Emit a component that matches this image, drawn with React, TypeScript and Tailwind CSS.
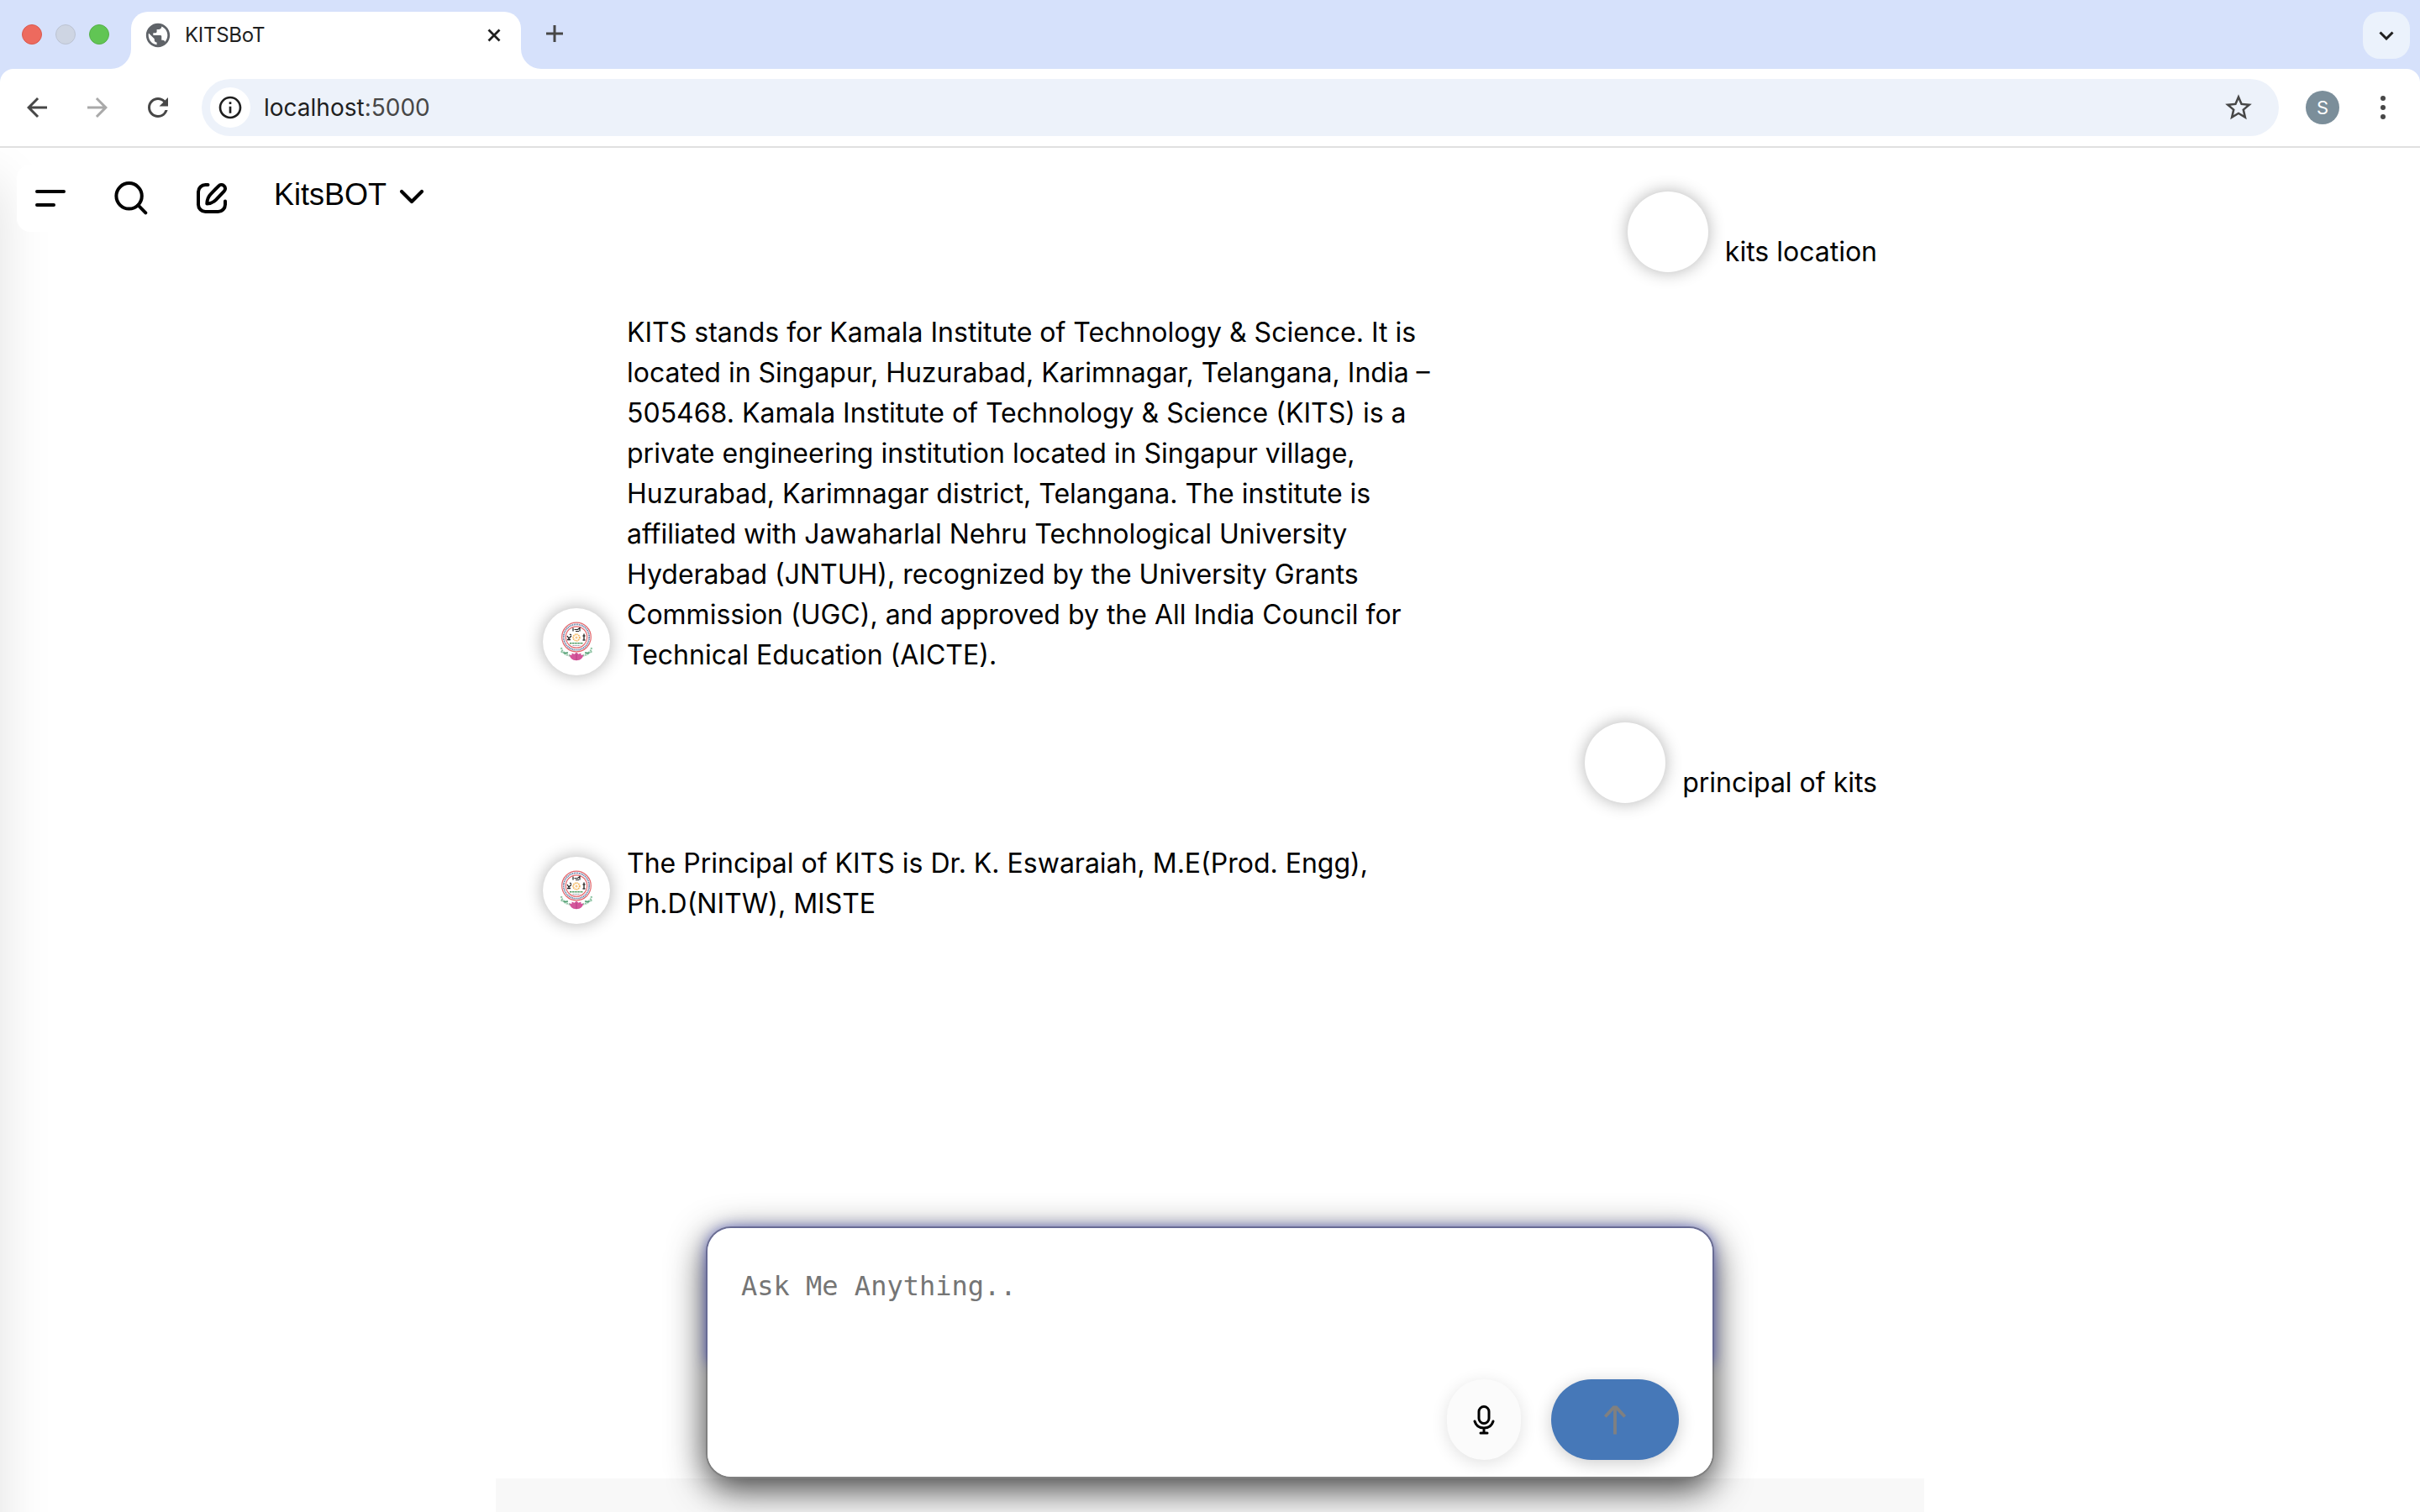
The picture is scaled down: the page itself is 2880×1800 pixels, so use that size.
import React from "react";
import {
  MdArrowBack,
  MdArrowForward,
  MdInfoOutline,
  MdPublic,
  MdRefresh,
  MdStarBorder,
} from "react-icons/md";

function TabStrip() {
  return (
    <div className="flex h-[82px] shrink-0 items-start bg-[#d6e1fb]">
      <div className="flex h-[82px] w-[156px] items-center gap-4 pl-[26px]">
        <span className="size-6 rounded-full border border-[#d9594e] bg-[#ed6a5e]" />
        <span className="size-6 rounded-full border border-[#bcc3d2] bg-[#ced5e3]" />
        <span className="size-6 rounded-full border border-[#55b048] bg-[#61c554]" />
      </div>
      <div className="relative mt-[14px] flex h-[68px] w-[464px] items-start rounded-t-[20px] bg-white pl-[18px]">
        <svg className="absolute bottom-0 -left-6 size-6" viewBox="0 0 24 24">
          <path d="M24 0v24H0A24 24 0 0 0 24 0Z" fill="#fff" />
        </svg>
        <svg className="absolute -right-6 bottom-0 size-6" viewBox="0 0 24 24">
          <path d="M0 0v24h24A24 24 0 0 1 0 0Z" fill="#fff" />
        </svg>
        <div className="flex h-14 w-full items-center">
          <MdPublic className="-ml-[3px] size-[34px] text-[#5f6368]" />
          <span className="ml-[15px] flex-1 text-[24px] leading-none tracking-[-0.3px] text-[#1f1f1f]">
            KITSBoT
          </span>
          <svg className="mr-6 size-4" viewBox="0 0 16 16">
            <path d="M1.500 1.500l13 13M14.500 1.500l-13 13" stroke="#1f1f1f" strokeWidth="2.800" />
          </svg>
        </div>
      </div>
      <svg className="mt-[30px] ml-[30px] size-5" viewBox="0 0 20 20">
        <path d="M0 10h20M10 0v20" stroke="#474747" strokeWidth="3" />
      </svg>
      <div className="mt-[14px] mr-3 ml-auto flex size-14 items-center justify-center rounded-[20px] bg-[#ebf2fc]">
        <svg className="h-[11px] w-[18px]" viewBox="0 0 18 11">
          <path d="M1.500 1.500L9 9l7.500-7.500" fill="none" stroke="#1f1f1f" strokeWidth="3" />
        </svg>
      </div>
    </div>
  );
}

function Toolbar() {
  return (
    <div className="shrink-0 bg-[#d6e1fb]">
      <div className="flex h-[94px] items-center rounded-t-[16px] border-b-2 border-[#e0e0e0] bg-white">
        <MdArrowBack className="ml-[26px] size-9 text-[#474747]" />
        <MdArrowForward className="ml-9 size-9 text-[#a9a9a9]" />
        <MdRefresh className="ml-9 size-9 text-[#474747]" />
        <div className="ml-[34px] flex h-[68px] w-[2472px] items-center rounded-full bg-[#edf2fa] pr-[29px] pl-[10px]">
          <span className="flex size-12 items-center justify-center rounded-full bg-white">
            <MdInfoOutline className="size-8 text-[#1f1f1f]" />
          </span>
          <span className="ml-4 flex-1 text-[28px] leading-none text-[#1f1f1f]">
            localhost<span className="text-[#474747]">:5000</span>
          </span>
          <MdStarBorder className="size-[38px] text-[#474747]" />
        </div>
        <span className="ml-8 flex size-10 items-center justify-center rounded-full bg-[#7b8e9a] text-[22px] leading-none text-white">
          S
        </span>
        <div className="ml-[49px] flex flex-col gap-[5px]">
          <span className="size-1.5 rounded-full bg-[#474747]" />
          <span className="size-1.5 rounded-full bg-[#474747]" />
          <span className="size-1.5 rounded-full bg-[#474747]" />
        </div>
      </div>
    </div>
  );
}

function AppHeader() {
  return (
    <header className="absolute top-5 left-5 flex h-20 w-[500px] items-start rounded-2xl bg-white text-black">
      <svg className="mt-[29px] ml-[22px] h-[22px] w-9" viewBox="0 0 36 22">
        <path d="M2 3h32M2 19h20" stroke="currentColor" strokeWidth="4" strokeLinecap="round" />
      </svg>
      <svg className="mt-5 ml-[58px] size-10" viewBox="0 0 40 40" fill="none" stroke="currentColor" strokeWidth="4">
        <circle cx="17.600" cy="17.300" r="15.200" />
        <path d="M28.500 28.300L37.300 37.300" strokeLinecap="round" />
      </svg>
      <svg
        className="mt-[22px] ml-[58px] size-9"
        viewBox="0 0 36 36"
        fill="none"
        stroke="currentColor"
        strokeWidth="4"
        strokeLinecap="round"
        strokeLinejoin="round"
      >
        <path d="M13.500 2h-3A8.500 8.500 0 0 0 2 10.500v15A8.500 8.500 0 0 0 10.500 34h15a8.500 8.500 0 0 0 8.500-8.500V21.500" />
        <path d="M12.300 24.500c.2-5.500 1.200-8.200 4.200-11.200L26.300 3.300a4.500 4.500 0 0 1 6.400 6.400L23 19.800c-3 3-5.700 4.500-10.700 4.700z" />
      </svg>
      <span className="mt-[16px] ml-[56px] font-['Liberation_Sans',sans-serif] text-[36px] leading-[40px]">KitsBOT</span>
      <svg className="mt-[28px] ml-[15px] h-[20px] w-[30px]" viewBox="0 0 30 20">
        <path
          d="M3 4L15 16L27 4"
          fill="none"
          stroke="currentColor"
          strokeWidth="4.200"
          strokeLinecap="round"
          strokeLinejoin="round"
        />
      </svg>
    </header>
  );
}

function Crest() {
  return (
    <svg className="h-12 w-10" viewBox="0 0 40 48" fill="none">
      <circle cx="20" cy="18.500" r="17.300" stroke="#e4686d" strokeWidth="1.200" />
      <circle cx="20" cy="18.500" r="15.200" stroke="#6a7ea3" strokeWidth="1.800" strokeDasharray="1.300 0.700" />
      <circle cx="20" cy="18.500" r="12.700" stroke="#e4686d" strokeWidth="1.200" />
      <path d="M16 7.500v4M17.500 9.500h4l2.500-2v4M19 11.500h4" stroke="#222" strokeWidth="1.200" />
      <path d="M9 17l2 3 3-3M9 21.500h4M12 15l2 1" stroke="#222" strokeWidth="1.300" />
      <path d="M29 14.500v8M27.500 17h3M27.500 22h3" stroke="#333" strokeWidth="1.400" />
      <circle cx="20" cy="19" r="3.800" stroke="#f4b65c" strokeWidth="1.800" strokeDasharray="1.500 0.700" />
      <circle cx="20" cy="19" r="1.500" fill="#f7c987" />
      <path d="M12 25.800h16" stroke="#4e9c61" strokeWidth="1.500" strokeDasharray="2.500 0.600" />
      <path d="M15.500 28.500h9" stroke="#8a93a5" strokeWidth="0.900" strokeDasharray="1.500 0.500" />
      <path
        d="M2 31c1 6 5 9 11 9.500M38 31c-1 6-5 9-11 9.500M1.500 36c3 0 5 1 7 4M38.500 36c-3 0-5 1-7 4"
        stroke="#8fc5a5"
        strokeWidth="2.200"
        strokeDasharray="1.800 0.900"
      />
      <path d="M5 37.500l5-.5M35 37.500l-5-.5" stroke="#4e9c70" strokeWidth="1.600" />
      <path
        d="M20 36.500l2.500 2.300 2.800-1.300.4 2.500 2.600-.5c-.8 4-3 6.500-8.300 6.700-5.300-.2-7.500-2.700-8.300-6.700l2.600.5.4-2.500 2.800 1.300z"
        fill="#d4559a"
      />
      <path d="M20 39v7" stroke="#b23a80" strokeWidth="0.800" />
    </svg>
  );
}

function UserMessage({ text }: { text: string }) {
  return (
    <div className="flex items-end gap-5 self-end">
      <span className="size-24 rounded-full bg-white shadow-[0_0_20px_rgba(0,0,0,0.3)]" />
      <p>{text}</p>
    </div>
  );
}

function BotMessage({ text }: { text: string }) {
  return (
    <div className="flex items-end gap-5">
      <span className="flex size-20 shrink-0 items-center justify-center rounded-full bg-white shadow-[0_0_20px_rgba(0,0,0,0.3)]">
        <Crest />
      </span>
      <p className="w-[975px]">{text}</p>
    </div>
  );
}

function Composer() {
  return (
    <div className="relative z-10 flex h-[300px] w-[1200px] flex-col rounded-[30px] border-2 border-[#808080] bg-white shadow-[0_12px_44px_rgba(0,0,0,0.78)]">
      <div className="h-[160px] rounded-t-[28px] bg-white px-10 pt-[50px] font-['DejaVu_Sans_Mono',monospace] text-[32px] leading-[38px] text-[#757575] shadow-[0_0_16px_rgba(45,55,200,0.65)]">
        Ask Me Anything..
      </div>
      <div className="relative flex flex-1 items-start justify-end gap-9 rounded-b-[28px] bg-white pt-5 pr-10">
        <button className="flex h-24 w-[88px] items-center justify-center rounded-full bg-[#fbfbfb] shadow-[0_4px_20px_rgba(0,0,0,0.12)]">
          <svg className="h-9 w-7" viewBox="0 0 28 36" fill="none" stroke="#000" strokeWidth="3" strokeLinecap="round">
            <rect x="8" y="2.500" width="12" height="20" rx="6" />
            <path d="M3 20c1.500 5 5.500 8 11 8s9.500-3 11-8M14 28v6M10 34h8" />
          </svg>
        </button>
        <button className="flex h-24 w-[152px] items-center justify-center rounded-[48px] bg-[#4678b8] shadow-[0_4px_20px_rgba(0,0,0,0.2)]">
          <svg className="h-9 w-7" viewBox="0 0 28 36" fill="none" stroke="#808080" strokeWidth="3.800">
            <path d="M14 35.500V2M2.300 14.500L12.500 3.400h3L25.700 14.500" />
          </svg>
        </button>
      </div>
    </div>
  );
}

export default function App() {
  return (
    <div className="flex h-[1800px] w-[2880px] flex-col overflow-hidden bg-white font-['Inter',sans-serif]">
      <TabStrip />
      <Toolbar />
      <main className="relative flex flex-1 flex-col overflow-hidden">
        <div className="absolute top-10 -bottom-40 -left-[200px] w-[200px] shadow-[0_0_60px_rgba(0,0,0,0.12)]" />
        <AppHeader />
        <div className="ml-[646px] flex w-[1588px] flex-1 flex-col gap-12 pt-[52px] text-[32px] leading-[48px] text-black">
          <UserMessage text="kits location" />
          <BotMessage text="KITS stands for Kamala Institute of Technology & Science. It is located in Singapur, Huzurabad, Karimnagar, Telangana, India – 505468. Kamala Institute of Technology & Science (KITS) is a private engineering institution located in Singapur village, Huzurabad, Karimnagar district, Telangana. The institute is affiliated with Jawaharlal Nehru Technological University Hyderabad (JNTUH), recognized by the University Grants Commission (UGC), and approved by the All India Council for Technical Education (AICTE)." />
          <div className="mt-2 flex flex-col gap-12">
            <UserMessage text="principal of kits" />
            <BotMessage text="The Principal of KITS is Dr. K. Eswaraiah, M.E(Prod. Engg), Ph.D(NITW), MISTE" />
          </div>
        </div>
        <div className="relative flex flex-col items-center">
          <Composer />
          <div className="h-10 w-[1700px] bg-[#f8f8f8]" />
        </div>
      </main>
    </div>
  );
}
